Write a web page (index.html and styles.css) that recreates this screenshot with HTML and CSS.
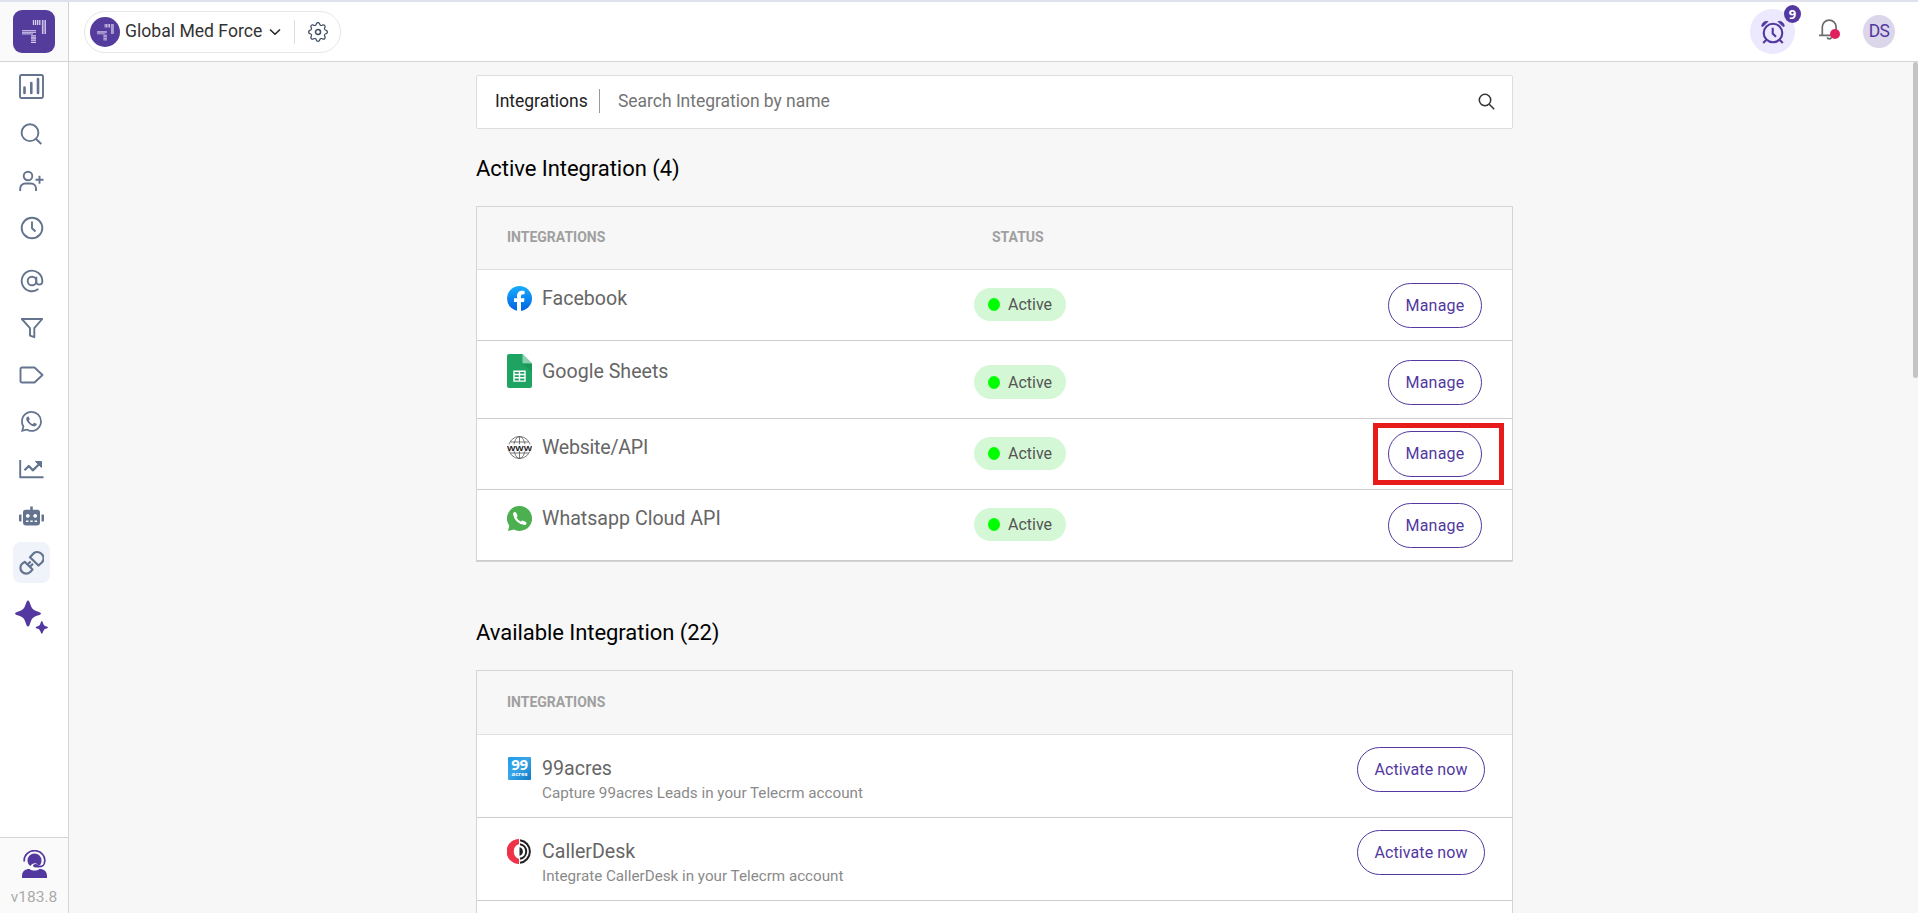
FILE: index.html
```html
<!DOCTYPE html>
<html lang="en">
<head>
<meta charset="utf-8">
<title>Integrations</title>
<link rel="stylesheet" href="styles.css">
</head>
<body>
<svg width="0" height="0" class="defs" aria-hidden="true">
  <defs>
    <linearGradient id="fb" x1="0" y1="0" x2="0" y2="1"><stop offset="0" stop-color="#18acfe"/><stop offset="1" stop-color="#0163e0"/></linearGradient>
    <linearGradient id="acres" x1="0" y1="0" x2="1" y2="1"><stop offset="0" stop-color="#1f9be8"/><stop offset=".45" stop-color="#3aa6e8"/><stop offset="1" stop-color="#0d79c4"/></linearGradient>
    <symbol id="brand" viewBox="0 0 24 24">
      <path d="M11.5 0v5M13.6 0v5M15.7 0v5M17.8 0v5" stroke-width="1.3"/>
      <path d="M20.4 0v14M22 0v14M23.6 0v14" stroke-width="1"/>
      <path d="M0 10.7h14M0 12.3h14M0 13.9h11" stroke-width="1"/>
      <path d="M9 15.8h5M9 18h5M9 20.2h5M9 22.4h5" stroke-width="1.3"/>
    </symbol>
  </defs>
</svg>
<div class="app">
  <aside class="sidebar">
    <div class="sidebar-top"><div class="logo"><svg width="24" height="24" stroke="#d8d0f0"><use href="#brand"/></svg></div></div>
    <nav class="nav">
      <a class="nav-item"><svg width="25" height="25" viewBox="0 0 25 25" class="line"><rect x="1" y="1" width="23" height="23" rx="1.5"/><path d="M5.5 13.500v5.500M12.300 9v10M19 5v14" stroke-width="2.600" stroke-linecap="round"/></svg></a>
      <a class="nav-item"><svg width="25" height="22" viewBox="0 0 25 22" class="line"><circle cx="11" cy="9.700" r="8.400"/><path d="M16.800 15.700l5.500 5.300"/></svg></a>
      <a class="nav-item"><svg width="25" height="22" viewBox="0 0 25 22" class="line"><circle cx="9" cy="6" r="4.300"/><path d="M1.200 21v-2.500a5 5 0 0 1 5-5h5.800a5 5 0 0 1 5 5V21M16.500 9.800h8M20.500 5.800v8"/></svg></a>
      <a class="nav-item"><svg width="24" height="24" viewBox="0 0 24 24" class="line"><circle cx="12" cy="12" r="10.300"/><path d="M12 5.500v6.700l3.500 3.300"/></svg></a>
      <span class="nav-gap"></span>
      <a class="nav-item"><svg width="24" height="24" viewBox="0 0 24 24" class="line"><circle cx="12" cy="12" r="4.300"/><path d="M16.300 7.800v5.500a3.100 3.100 0 0 0 6 0V12a10.300 10.300 0 1 0-4 8.100"/></svg></a>
      <a class="nav-item"><svg width="24" height="22" viewBox="0 0 24 22" class="line"><path d="M1.800 2h20.400l-7.900 9.200v9L10 18.700v-7.500z"/></svg></a>
      <a class="nav-item"><svg width="25" height="18" viewBox="0 0 25 18" class="line"><path d="M3 1.500h12.500L23.500 9l-8 7.500H3A1.500 1.500 0 0 1 1.500 15V3A1.500 1.500 0 0 1 3 1.500z"/></svg></a>
      <a class="nav-item"><svg width="21" height="21" viewBox="0 0 16 16" fill="#64748f"><path fill-rule="evenodd" d="M13.601 2.326A7.854 7.854 0 0 0 7.994 0C3.627 0 .068 3.558.064 7.926c0 1.399.366 2.760 1.057 3.965L0 16l4.204-1.102a7.933 7.933 0 0 0 3.790.965h.004c4.368 0 7.926-3.558 7.930-7.930A7.898 7.898 0 0 0 13.600 2.326zM7.994 14.521a6.573 6.573 0 0 1-3.356-.920l-.240-.144-2.494.654.666-2.433-.156-.251a6.560 6.560 0 0 1-1.007-3.505c0-3.626 2.957-6.584 6.591-6.584a6.560 6.560 0 0 1 4.660 1.931 6.557 6.557 0 0 1 1.928 4.660c-.004 3.639-2.961 6.592-6.592 6.592z"/><path d="M11.610 9.585c-.197-.099-1.170-.578-1.353-.646-.182-.065-.315-.099-.445.099-.133.197-.513.646-.627.775-.114.133-.232.148-.430.050-.197-.100-.836-.308-1.592-.985-.590-.525-.985-1.175-1.103-1.372-.114-.198-.011-.304.088-.403.087-.088.197-.232.296-.346.100-.114.133-.198.198-.330.065-.134.034-.248-.015-.347-.050-.099-.445-1.076-.612-1.470-.160-.389-.323-.335-.445-.340-.114-.007-.247-.007-.380-.007a.729.729 0 0 0-.529.247c-.182.198-.691.677-.691 1.654 0 .977.710 1.916.810 2.049.098.133 1.394 2.132 3.383 2.992.470.205.840.326 1.129.418.475.152.904.129 1.246.080.380-.058 1.171-.480 1.338-.943.164-.464.164-.860.114-.943-.049-.084-.182-.133-.380-.232z"/></svg></a>
      <a class="nav-item"><svg width="25" height="20" viewBox="0 0 25 20" class="line"><path d="M1.200 1v17.200H24.500"/><path d="M5.500 11.300L9.800 7l4 4.300 6-5.800" stroke-width="2.300"/><path d="M16.500 2.500h6v6z" fill="#64748f" stroke-width="1"/></svg></a>
      <a class="nav-item"><svg width="25" height="20" viewBox="0 0 25 20" fill="#64748f"><path fill-rule="evenodd" d="M11.200.500h2.600v3.200h4.700a2.500 2.500 0 0 1 2.500 2.500v10.300a3 3 0 0 1-3 3H7a3 3 0 0 1-3-3V6.200a2.500 2.500 0 0 1 2.500-2.500h4.700zM8.800 8a1.900 1.900 0 1 0 .01 0zM16.200 8a1.900 1.900 0 1 0 .01 0zM7 14.500V16h2.400v-1.500zM11.300 14.500V16h2.400v-1.500zM15.600 14.500V16H18v-1.500z"/><path d="M0 9.500a1 1 0 0 1 1-1h1.500v7H1a1 1 0 0 1-1-1zM22.500 8.500H24a1 1 0 0 1 1 1v5a1 1 0 0 1-1 1h-1.500z"/></svg></a>
      <a class="nav-item"><span class="nav-active"><svg width="25" height="25" viewBox="0 0 25 25" class="line plug"><path d="M11 7.200l3.500-3.800a6.200 6.200 0 0 1 8.600 8.800l-3.600 3.300z"/><path d="M5.700 11.800l7.800 7.700-2.300 2.500a5.800 5.800 0 0 1-8.200-8.200zM8.600 14.500l3-3M11 16.800l3-3"/></svg></span></a>
      <a class="nav-spark"><svg width="33" height="34" viewBox="0 0 33 34" fill="#52389f"><path d="M13 .500c1.200 0 1.700 2 2.800 5 1.200 3 2 4 4.700 5.200 3 1.100 5.500 1.700 5.500 2.800s-2.500 1.700-5.500 2.800c-2.700 1.200-3.500 2.200-4.700 5.200-1.100 3-1.600 5-2.800 5s-1.700-2-2.800-5c-1.200-3-2-4-4.700-5.200-3-1.100-5.500-1.700-5.500-2.800s2.500-1.700 5.500-2.800c2.700-1.200 3.500-2.200 4.700-5.200 1.100-3 1.600-5 2.800-5z"/><path d="M26.800 21c.600 0 .900 1.400 1.600 3 .700 1.500 1 1.700 2.300 2.200 1.300.500 2.200.600 2.200 1.200s-.900.800-2.200 1.300c-1.300.500-1.600.800-2.300 2.300-.700 1.600-1 2.800-1.600 2.800s-.900-1.200-1.600-2.800c-.700-1.500-1-1.800-2.300-2.300-1.300-.500-2.200-.700-2.200-1.300s.900-.700 2.200-1.200c1.300-.500 1.600-.700 2.300-2.200.700-1.600 1-3 1.600-3z"/></svg></a>
    </nav>
    <div class="sidebar-foot">
      <svg width="25" height="28" viewBox="0 0 25 28" fill="#52389f"><path d="M2.200 11.500v-1a10.300 9.500 0 1 1 20.400 1.500c0 3-2.600 4.700-5.600 4.700h-2" fill="none" stroke="#52389f" stroke-width="1.700"/><path d="M5.500 10.500a7 7 0 0 1 14 0c0 3-1.200 4.800-3 5.500-.500-1.700-1.800-2.700-3.500-2.700-2 0-3.500 1-4.500 2.700-1.800-1.200-3-3-3-5.500z"/><ellipse cx="13.800" cy="15.800" rx="2.800" ry="1.800"/><path d="M0 28v-2c0-4.500 3-7 7.500-7 1.500 1 3 1.500 5 1.500s3.500-.500 5-1.500c4.500 0 7.500 2.500 7.500 7v2z"/></svg>
      <span class="version">v183.8</span>
    </div>
  </aside>
  <div class="page">
    <header class="header">
      <div class="org">
        <span class="org-logo"><svg width="17" height="17" stroke="#d8d0f0"><use href="#brand"/></svg></span>
        <span class="org-name">Global Med Force</span>
        <svg class="chevron" width="12" height="8" viewBox="0 0 12 8"><path d="M1 1.500l5 4.800 5-4.800"/></svg>
        <span class="org-sep"></span>
        <svg width="20" height="20" viewBox="0 0 16 16" fill="#3f4f63"><path fill-rule="evenodd" d="M9.796 1.343c-.527-1.790-3.065-1.790-3.592 0l-.094.319a.873.873 0 0 1-1.255.520l-.292-.160c-1.640-.892-3.433.902-2.540 2.541l.159.292a.873.873 0 0 1-.520 1.255l-.319.094c-1.790.527-1.790 3.065 0 3.592l.319.094a.873.873 0 0 1 .520 1.255l-.160.292c-.892 1.640.901 3.434 2.541 2.540l.292-.159a.873.873 0 0 1 1.255.520l.094.319c.527 1.790 3.065 1.790 3.592 0l.094-.319a.873.873 0 0 1 1.255-.520l.292.160c1.640.893 3.434-.902 2.540-2.541l-.159-.292a.873.873 0 0 1 .520-1.255l.319-.094c1.790-.527 1.790-3.065 0-3.592l-.319-.094a.873.873 0 0 1-.520-1.255l.160-.292c.893-1.640-.902-3.433-2.541-2.540l-.292.159a.873.873 0 0 1-1.255-.520l-.094-.319zm-2.633.283c.246-.835 1.428-.835 1.674 0l.094.319a1.873 1.873 0 0 0 2.693 1.115l.291-.160c.764-.415 1.600.420 1.184 1.185l-.159.292a1.873 1.873 0 0 0 1.116 2.692l.318.094c.835.246.835 1.428 0 1.674l-.319.094a1.873 1.873 0 0 0-1.115 2.693l.160.291c.415.764-.420 1.600-1.185 1.184l-.291-.159a1.873 1.873 0 0 0-2.693 1.116l-.094.318c-.246.835-1.428.835-1.674 0l-.094-.319a1.873 1.873 0 0 0-2.692-1.115l-.292.160c-.764.415-1.600-.420-1.184-1.185l.159-.291A1.873 1.873 0 0 0 1.945 8.930l-.319-.094c-.835-.246-.835-1.428 0-1.674l.319-.094A1.873 1.873 0 0 0 3.060 4.377l-.160-.292c-.415-.764.420-1.600 1.185-1.184l.292.159a1.873 1.873 0 0 0 2.692-1.115l.094-.319z"/><circle cx="8" cy="8" r="2" fill="none" stroke="#3f4f63" stroke-width="1.200"/></svg>
      </div>
      <div class="actions">
        <div class="alarm">
          <svg width="24" height="24" viewBox="0 0 24 24" fill="none" stroke="#52389f" stroke-width="2.100"><circle cx="12" cy="13" r="9.300"/><path d="M11.700 7.800v5.700l3.300 3.300M5.200 20l-3 3M18.800 20l3 3"/><path d="M.700 6.200A5 5 0 0 1 7 1.500L2 6.500zM23.300 6.200A5 5 0 0 0 17 1.500l5 5z" fill="#52389f" stroke="#52389f" stroke-width=".8"/></svg>
          <span class="badge">9</span>
        </div>
        <div class="bell">
          <svg width="20" height="22" viewBox="0 0 20 22" fill="none" stroke="#6b6b6b" stroke-width="1.700"><path d="M0 16.300h20M3.300 16V8a6.900 6.900 0 0 1 13.800 0v8"/><path d="M8.200 18.400a2.300 2.300 0 0 0 4.300 0"/></svg>
          <span class="bell-dot"></span>
        </div>
        <div class="avatar">DS</div>
      </div>
    </header>
    <main class="content">
      <div class="search">
        <span class="search-label">Integrations</span>
        <span class="search-placeholder">Search Integration by name</span>
        <svg width="17" height="17" viewBox="0 0 17 17" fill="none" stroke="#333" stroke-width="1.500"><circle cx="7" cy="7" r="5.700"/><path d="M11.200 11.200l5 5"/></svg>
      </div>
      <h2 class="heading">Active Integration (4)</h2>
      <section class="table">
        <div class="thead"><span class="th-name">INTEGRATIONS</span><span>STATUS</span></div>
        <div class="row">
          <div class="name"><svg width="25" height="25" viewBox="0 0 25 25"><circle cx="12.500" cy="12.500" r="12.500" fill="url(#fb)"/><path fill="#fff" d="M10 25v-9H7v-3.800h3v-1.700c0-4 2-5.700 5.200-5.700.900 0 1.700.100 2.400.200v3.300h-1.600c-1.500 0-2 .700-2 2v1.900h3.500L17 16h-3v9z"/></svg><span>Facebook</span></div>
          <div class="status"><i></i>Active</div><button class="btn">Manage</button>
        </div>
        <div class="row row-sheets">
          <div class="name"><svg width="25" height="34" viewBox="0 0 25 34"><path d="M2 0h13.500L25 9.500V32a2 2 0 0 1-2 2H2a2 2 0 0 1-2-2V2a2 2 0 0 1 2-2z" fill="#1ea362"/><path d="M15.500 0L25 9.500h-8a1.500 1.500 0 0 1-1.500-1.500z" fill="#8ed1b1"/><path d="M16 9.500h9V18z" fill="#158a50" opacity=".5"/><path fill="none" stroke="#fff" stroke-width="1.400" d="M7 17.200h11v9.900H7zM12.500 17v10M7 20.500h11M7 23.800h11"/></svg><span>Google Sheets</span></div>
          <div class="status"><i></i>Active</div><button class="btn">Manage</button>
        </div>
        <div class="row row-web">
          <div class="name"><svg width="25" height="23" viewBox="0 0 25 23"><g fill="none" stroke="#555" stroke-width=".8"><circle cx="12.500" cy="11.500" r="11"/><ellipse cx="12.500" cy="11.500" rx="5.700" ry="11"/><path d="M12.500.500v22M3.500 6h18M3.500 17h18"/></g><path fill="#fff" d="M0 8.300h25v6.900H0z"/><text x="12.500" y="14.600" text-anchor="middle" textLength="25" lengthAdjust="spacingAndGlyphs" class="www">WWW</text></svg><span class="name-web">Website/API</span></div>
          <div class="status"><i></i>Active</div><div class="marked"><button class="btn">Manage</button></div>
        </div>
        <div class="row row-last">
          <div class="name"><svg width="25" height="25" viewBox="0 0 25 25"><path fill="#4caf50" d="M12.500 0a12.500 12.500 0 1 1-5.700 23.600L1 25l1.300-5.300A12.500 12.500 0 0 1 12.500 0z"/><path fill="none" stroke="#fff" stroke-width="2.200" stroke-linecap="round" d="M7.500 8c0 5 5 9.700 10 9.700"/><path fill="none" stroke="#fff" stroke-width="3.400" stroke-linecap="round" d="M7.800 7.700l1 2M15.500 16.300l2.300 1"/></svg><span>Whatsapp Cloud API</span></div>
          <div class="status"><i></i>Active</div><button class="btn">Manage</button>
        </div>
      </section>
      <h2 class="heading heading-second">Available Integration (22)</h2>
      <section class="table table-available">
        <div class="thead"><span class="th-name">INTEGRATIONS</span></div>
        <div class="row">
          <div class="name"><svg class="acres-logo" width="25" height="23" viewBox="0 0 25 23"><rect x="1" width="23" height="23" rx="1" fill="url(#acres)"/><text x="12.500" y="13" text-anchor="middle" class="n99">99</text><text x="12.500" y="19" text-anchor="middle" class="acres" textLength="16">acres</text></svg><span>99acres</span><small>Capture 99acres Leads in your Telecrm account</small></div>
          <button class="btn">Activate now</button>
        </div>
        <div class="row">
          <div class="name"><svg width="25" height="25" viewBox="0 0 25 25"><path fill="#ee3349" d="M12 0v5a8 8 0 0 0 0 15v5a12.500 12.500 0 0 1 0-25z"/><g fill="none" stroke="#222" stroke-width="2"><path d="M13 1.200a11.400 11.400 0 0 1 0 22.600M13 5.200a7.400 7.400 0 0 1 0 14.600"/></g><path d="M12.500 8.300a4.300 4.300 0 0 1 0 8.400z" fill="#222"/></svg><span>CallerDesk</span><small>Integrate CallerDesk in your Telecrm account</small></div>
          <button class="btn">Activate now</button>
        </div>
        <div class="row"></div>
      </section>
    </main>
    <div class="scrollbar"></div>
  </div>
</div>
</body>
</html>
```
FILE: styles.css
```css
*, *::after { box-sizing: border-box; }
body { margin: 0; height: 913px; overflow: hidden; background: #f7f7f7; font-family: Roboto, "Liberation Sans", sans-serif; color: #222; }
.defs { position: absolute; }
svg { display: block; flex: none; }
.app { display: flex; height: 913px; border-top: 2px solid #dfe1ec; }

.sidebar { width: 69px; flex: none; display: flex; flex-direction: column; background: #fff; border-right: 1px solid #d4d4d4; }
.sidebar-top { height: 60px; flex: none; padding: 8px 0 0 13px; background: #fafafa; border-bottom: 1px solid #d4d4d4; }
.logo { width: 42px; height: 43px; border-radius: 9px; background: #533c9b; display: grid; place-items: center; }
.nav { flex: 1; padding-top: 1px; width: 63px; }
.nav-item { display: flex; height: 47px; align-items: center; justify-content: center; }
.nav-gap { display: block; height: 6px; }
.nav-active { display: grid; place-items: center; width: 37px; height: 41px; border-radius: 8px; background: #f0f3f9; }
.nav-spark { display: flex; justify-content: center; padding-top: 14px; }
.line { fill: none; stroke: #64748f; stroke-width: 1.9; stroke-linejoin: round; }
.plug { stroke-width: 2.2; }
.sidebar-foot { height: 76px; flex: none; border-top: 1px solid #d4d4d4; background: #fafafa; display: flex; flex-direction: column; align-items: center; padding-top: 12px; }
.version { font-size: 15.5px; line-height: 20px; margin-top: 9px; color: #aaa; }

.page { flex: 1; position: relative; }
.header { height: 60px; background: #fff; border-bottom: 1px solid #d4d4d4; display: flex; justify-content: space-between; align-items: flex-start; padding: 9px 23px 0 15px; }
.org { width: 257px; height: 42px; border: 1px solid #e6e6e6; border-radius: 21px; display: flex; align-items: center; padding-left: 5px; }
.org-logo { width: 30px; height: 30px; border-radius: 50%; background: #533c9b; display: grid; place-items: center; }
.org-name { font-size: 17.6px; line-height: 24px; margin: -2px 0 0 5px; width: 137px; white-space: nowrap; color: #333; }
.chevron { margin: -1px 13px 0 7px; fill: none; stroke: #222; stroke-width: 1.5; }
.org-sep { width: 1px; height: 24px; background: #ddd; margin-right: 13px; }
.actions { display: flex; }
.alarm { position: relative; width: 45px; height: 45px; margin-top: -2px; border-radius: 50%; background: #ece8fd; display: grid; place-items: center; }
.badge { position: absolute; left: 34px; top: -4px; width: 17px; height: 18px; border-radius: 50%; background: #52389f; color: #fff; font: 700 13px/18px "Open Sans", sans-serif; text-align: center; }
.bell { position: relative; margin: 8px 0 0 24px; }
.bell-dot { position: absolute; left: 11px; top: 10px; width: 10px; height: 10px; border-radius: 50%; background: #e0205c; }
.avatar { width: 32px; height: 33px; margin: 4px 0 0 24px; border-radius: 50%; background: #dcd6ea; color: #52389f; font-size: 17.5px; line-height: 32px; text-align: center; letter-spacing: -.8px; }

.content { width: 1037px; margin: 13px 0 0 407px; height: 838px; overflow: hidden; }
.search { height: 54px; background: #fff; border: 1px solid #ddd; border-radius: 2px; display: flex; align-items: center; padding: 0 17px 2px 18px; font-size: 17.5px; letter-spacing: -.03px; }
.search-label { width: 105px; line-height: 24px; border-right: 1px solid #999; white-space: nowrap; }
.search-placeholder { flex: 1; padding-left: 18px; color: #757575; }
.heading { margin: 25px 0 22px; font-size: 22px; letter-spacing: -.05px; line-height: 30px; font-weight: 400; color: #000; }
.heading-second { margin: 56px 0 22px; }
.table { background: #fff; border: 1px solid #d4d4d4; }
.thead { display: flex; height: 63px; align-items: center; padding: 0 0 2px 30px; background: #f7f7f7; border-bottom: 1px solid #e0e0e0; font-size: 14px; font-weight: 700; color: #a0a0a0; }
.th-name { width: 485px; }
.table-available .thead { height: 64px; }
.row { height: 71px; border-bottom: 1px solid #ccc; display: grid; grid-template-columns: 467px 1fr auto; padding: 0 30px; align-items: start; }
.row-sheets { height: 78px; }
.name { display: grid; grid-template-columns: 25px 1fr; column-gap: 10px; align-items: center; padding-top: 16px; font-size: 19.6px; line-height: 25px; color: #666; }
.name-web { letter-spacing: -.25px; }
.row-sheets .name { padding-top: 13px; }
.status { display: flex; align-items: center; width: 92px; height: 33px; margin-top: 18px; padding-left: 14px; border-radius: 17px; background: #d4f8d5; font-size: 16px; color: #555; }
.status i { width: 12px; height: 13px; margin-right: 8px; border-radius: 50%; background: #0f0; }
.row-sheets .status { margin-top: 24px; height: 34px; }
.btn { width: 94px; height: 45px; margin-top: 13px; padding: 0; border: 1px solid #52389f; border-radius: 23px; background: #fff; color: #52389f; font: 400 16px/20px Roboto, sans-serif; letter-spacing: .25px; }
.row-sheets .btn { margin-top: 19px; }
.marked { position: relative; }
.marked::after { content: ""; position: absolute; left: -15px; top: 4px; width: 131px; height: 62px; border: 5px solid #e81b1b; }
.row-web .btn { margin-top: 12px; height: 46px; }
.table-available { border-bottom: 0; }
.table-available .row { height: 83px; grid-template-columns: 1fr auto; padding-right: 27px; }
.table-available .name { padding-top: 21px; }
.table-available .btn { width: 128px; margin-top: 12px; letter-spacing: .1px; }
.name small { grid-column: 2; margin-top: 2px; font-size: 15.2px; line-height: 20px; color: #8a8a8a; }
.www { font: 700 8px "Liberation Sans", sans-serif; fill: #222; }
.acres-logo { overflow: visible; }
.n99 { font: 700 15px "Open Sans", sans-serif; fill: #fff; letter-spacing: -.3px; }
.acres { font: 700 6px "Open Sans", sans-serif; fill: #fff; }
.scrollbar { position: absolute; right: 0; top: 60px; width: 5px; height: 316px; background: #c4c4c4; border-radius: 3px; }
```
